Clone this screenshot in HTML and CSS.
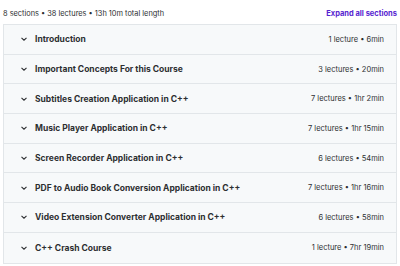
FILE: index.html
```html
<!DOCTYPE html>
<html lang="en">
<head>
    <meta charset="UTF-8">
    <meta name="viewport" content="width=device-width, initial-scale=1.0">
    <title>Course content</title>
    <link rel="stylesheet" href="styles.css">
</head>
<body>
    <div class="content">
        <div class="summary">
            <span class="stats">8 sections • 38 lectures • 13h 10m total length</span>
            <button type="button" class="expand">Expand all sections</button>
        </div>
        <div class="sections">
            <div class="section">
                <span class="chev"><svg viewBox="0 0 10 10"><path d="M2.5 3.8 L5 6.2 L7.5 3.8"/></svg></span>
                <span class="title">Introduction</span>
                <span class="meta">1 lecture • 6min</span>
            </div>
            <div class="section">
                <span class="chev"><svg viewBox="0 0 10 10"><path d="M2.5 3.8 L5 6.2 L7.5 3.8"/></svg></span>
                <span class="title">Important Concepts For this Course</span>
                <span class="meta">3 lectures • 20min</span>
            </div>
            <div class="section">
                <span class="chev"><svg viewBox="0 0 10 10"><path d="M2.5 3.8 L5 6.2 L7.5 3.8"/></svg></span>
                <span class="title">Subtitles Creation Application in C++</span>
                <span class="meta">7 lectures • 1hr 2min</span>
            </div>
            <div class="section">
                <span class="chev"><svg viewBox="0 0 10 10"><path d="M2.5 3.8 L5 6.2 L7.5 3.8"/></svg></span>
                <span class="title">Music Player Application in C++</span>
                <span class="meta">7 lectures • 1hr 15min</span>
            </div>
            <div class="section">
                <span class="chev"><svg viewBox="0 0 10 10"><path d="M2.5 3.8 L5 6.2 L7.5 3.8"/></svg></span>
                <span class="title">Screen Recorder Application in C++</span>
                <span class="meta">6 lectures • 54min</span>
            </div>
            <div class="section">
                <span class="chev"><svg viewBox="0 0 10 10"><path d="M2.5 3.8 L5 6.2 L7.5 3.8"/></svg></span>
                <span class="title">PDF to Audio Book Conversion Application in C++</span>
                <span class="meta">7 lectures • 1hr 16min</span>
            </div>
            <div class="section">
                <span class="chev"><svg viewBox="0 0 10 10"><path d="M2.5 3.8 L5 6.2 L7.5 3.8"/></svg></span>
                <span class="title">Video Extension Converter Application in C++</span>
                <span class="meta">6 lectures • 58min</span>
            </div>
            <div class="section">
                <span class="chev"><svg viewBox="0 0 10 10"><path d="M2.5 3.8 L5 6.2 L7.5 3.8"/></svg></span>
                <span class="title">C++ Crash Course</span>
                <span class="meta">1 lecture • 7hr 19min</span>
            </div>
        </div>
    </div>
</body>
</html>
```

FILE: styles.css
```css
body {
    margin: 0;
    padding: 0;
    background-color: #ffffff;
    font-family: Inter, "Noto Sans", sans-serif;
    color: #2d2f31;
}
.content {
    padding: 6px 3px 0 3px;
}
.summary {
    display: flex;
    justify-content: space-between;
    align-items: center;
    height: 14px;
    margin-bottom: 4px;
}
.stats {
    font-size: 7.4px;
    color: #2d2f31;
}
.expand {
    border: none;
    background: none;
    padding: 0;
    font-family: inherit;
    font-size: 7.5px;
    font-weight: 700;
    color: #5624d0;
    cursor: pointer;
}
.sections {
    border: 1px solid #e2e6e9;
}
.section {
    display: flex;
    align-items: center;
    height: 29.7px;
    box-sizing: border-box;
    padding: 0 12px 0 15px;
    background-color: #f7f9fa;
    border-bottom: 1px solid #e2e6e9;
}
.section:last-child {
    border-bottom: none;
}
.chev {
    display: flex;
    width: 10px;
    height: 10px;
    margin-right: 6px;
}
.chev svg {
    width: 10px;
    height: 10px;
    fill: none;
    stroke: #2d2f31;
    stroke-width: 1.1;
}
.title {
    flex: 1;
    font-size: 8.5px;
    font-weight: 700;
}
.meta {
    font-size: 7.5px;
}
```
